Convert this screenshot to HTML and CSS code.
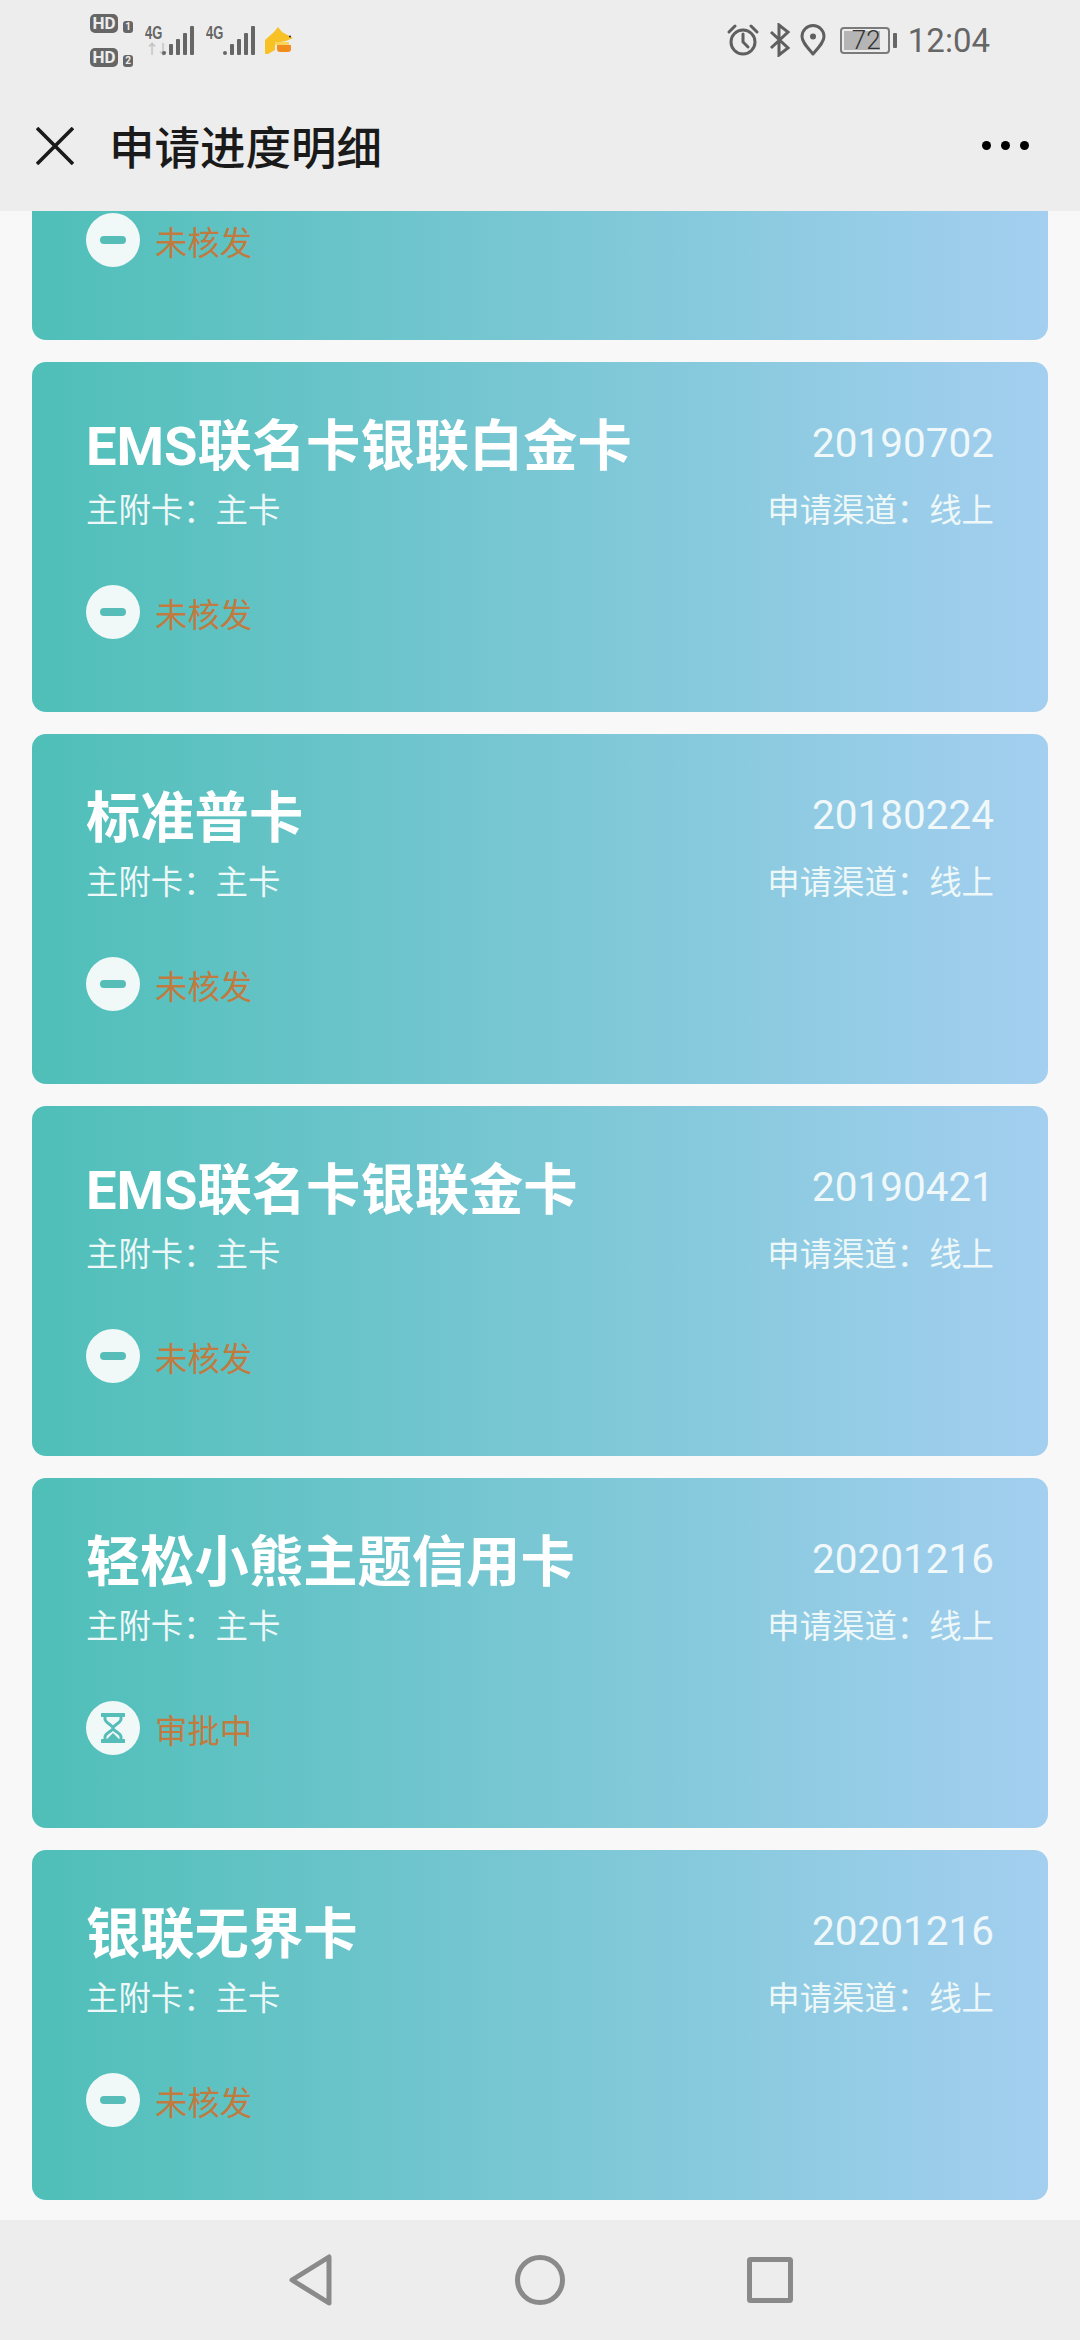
FILE: index.html
```html
<!DOCTYPE html>
<html lang="zh-CN">
<head>
    <meta charset="UTF-8">
    <meta name="viewport" content="width=device-width, initial-scale=1.0">
    <title>申请进度明细</title>
    <link rel="stylesheet" href="styles.css">
</head>
<body>
    <div class="screen">
        <!-- status bar -->
        <div class="statusbar">
            <div class="status-left">
                <div class="sims">
                    <div class="sim"><span class="hd">HD</span><span class="sim-no">1</span></div>
                    <div class="sim"><span class="hd">HD</span><span class="sim-no">2</span></div>
                </div>
                <div class="net">
                    <div class="net-labels">
                        <span class="net-type">4G</span>
                        <span class="net-arrows">↑↓</span>
                    </div>
                    <svg class="signal" width="32" height="29" viewBox="0 0 32 29">
                        <rect x="0" y="25" width="4" height="4" rx="2"/>
                        <rect x="7" y="18" width="4" height="11" rx="1"/>
                        <rect x="14" y="13" width="4" height="16" rx="1"/>
                        <rect x="21" y="7" width="4" height="22" rx="1"/>
                        <rect x="28" y="0" width="4" height="29" rx="1"/>
                    </svg>
                </div>
                <div class="net">
                    <div class="net-labels">
                        <span class="net-type">4G</span>
                    </div>
                    <svg class="signal" width="32" height="29" viewBox="0 0 32 29">
                        <rect x="0" y="25" width="4" height="4" rx="2"/>
                        <rect x="7" y="18" width="4" height="11" rx="1"/>
                        <rect x="14" y="13" width="4" height="16" rx="1"/>
                        <rect x="21" y="7" width="4" height="22" rx="1"/>
                        <rect x="28" y="0" width="4" height="29" rx="1"/>
                    </svg>
                </div>
                <svg class="pet" width="28" height="27" viewBox="0 0 28 27">
                    <path d="M0 13 L9 5 L13 0 L17 5 L28 11 L21 14 L10 16 L10 23 L3 27 L0 27 Z" fill="#f8c126"/>
                    <path d="M10 15 H24 V18 H10 Z" fill="#f8d65a"/>
                    <path d="M12 18 H26 V22 Q26 25 23 25 H15 Q12 25 12 22 Z" fill="#f28c1c"/>
                    <circle cx="25" cy="9.500" r="1" fill="#222"/>
                </svg>
            </div>
            <div class="status-right">
                <svg width="32" height="32" viewBox="0 0 32 32" fill="none" stroke="#5f5f5f" stroke-width="3">
                    <circle cx="16" cy="18" r="12"/>
                    <path d="M16 10 V18 L21 23" stroke-linecap="round"/>
                    <path d="M2 8 L8 2 M24 2 L30 8" stroke-linecap="round"/>
                </svg>
                <svg class="bt" width="22" height="34" viewBox="0 0 22 34" fill="none" stroke="#5f5f5f" stroke-width="3">
                    <path d="M2 9 L19 25 L10 32 V2 L19 9 L2 25"/>
                </svg>
                <svg class="pin" width="26" height="32" viewBox="0 0 26 32" fill="none" stroke="#5f5f5f" stroke-width="3">
                    <path d="M13 30 C7 23 2 18 2 12.500 A11 11 0 0 1 24 12.500 C24 18 19 23 13 30 Z" stroke-linejoin="round"/>
                    <circle cx="13" cy="12.500" r="3" fill="#5f5f5f" stroke="none"/>
                </svg>
                <div class="battery">
                    <div class="battery-body">
                        <div class="battery-fill"></div>
                        <span class="battery-text">72</span>
                    </div>
                    <div class="battery-tip"></div>
                </div>
                <span class="time">12:04</span>
            </div>
        </div>

        <!-- title bar -->
        <div class="titlebar">
            <svg class="close" width="38" height="38" viewBox="0 0 38 38" fill="none" stroke="#1a1a1a" stroke-width="3.6">
                <path d="M1 1 L37 37 M37 1 L1 37"/>
            </svg>
            <h1 class="page-title">申请进度明细</h1>
            <div class="more"><span></span><span></span><span></span></div>
        </div>

        <!-- cards are pinned to the bottom, the first one is scrolled under the title bar -->
        <div class="list">
            <div class="card">
                <div class="state">
                    <span class="state-icon"><i class="minus"></i></span>
                    <span class="state-text">未核发</span>
                </div>
            </div>
            <div class="card">
                <div class="card-row">
                    <div class="card-name">EMS联名卡银联白金卡</div>
                    <div class="card-date">20190702</div>
                </div>
                <div class="card-row card-sub">
                    <span>主附卡：主卡</span>
                    <span>申请渠道：线上</span>
                </div>
                <div class="state">
                    <span class="state-icon"><i class="minus"></i></span>
                    <span class="state-text">未核发</span>
                </div>
            </div>
            <div class="card">
                <div class="card-row">
                    <div class="card-name">标准普卡</div>
                    <div class="card-date">20180224</div>
                </div>
                <div class="card-row card-sub">
                    <span>主附卡：主卡</span>
                    <span>申请渠道：线上</span>
                </div>
                <div class="state">
                    <span class="state-icon"><i class="minus"></i></span>
                    <span class="state-text">未核发</span>
                </div>
            </div>
            <div class="card">
                <div class="card-row">
                    <div class="card-name">EMS联名卡银联金卡</div>
                    <div class="card-date">20190421</div>
                </div>
                <div class="card-row card-sub">
                    <span>主附卡：主卡</span>
                    <span>申请渠道：线上</span>
                </div>
                <div class="state">
                    <span class="state-icon"><i class="minus"></i></span>
                    <span class="state-text">未核发</span>
                </div>
            </div>
            <div class="card">
                <div class="card-row">
                    <div class="card-name">轻松小熊主题信用卡</div>
                    <div class="card-date">20201216</div>
                </div>
                <div class="card-row card-sub">
                    <span>主附卡：主卡</span>
                    <span>申请渠道：线上</span>
                </div>
                <div class="state">
                    <span class="state-icon">
                        <svg width="24" height="30" viewBox="0 0 24 30" fill="none" stroke="#56bdb9" stroke-width="3">
                            <path d="M1 2 H23 M1 28 H23" stroke-width="4" stroke-linecap="round"/>
                            <path d="M4 3 V6 C4 10 12 12 12 15 C12 18 4 20 4 24 V27 M20 3 V6 C20 10 12 12 12 15 C12 18 20 20 20 24 V27"/>
                            <path d="M5 27 L12 20 L19 27 Z" fill="#56bdb9" stroke="none"/>
                        </svg>
                    </span>
                    <span class="state-text">审批中</span>
                </div>
            </div>
            <div class="card">
                <div class="card-row">
                    <div class="card-name">银联无界卡</div>
                    <div class="card-date">20201216</div>
                </div>
                <div class="card-row card-sub">
                    <span>主附卡：主卡</span>
                    <span>申请渠道：线上</span>
                </div>
                <div class="state">
                    <span class="state-icon"><i class="minus"></i></span>
                    <span class="state-text">未核发</span>
                </div>
            </div>
        </div>

        <!-- android nav bar -->
        <div class="navbar">
            <svg width="44" height="52" viewBox="0 0 44 52" fill="none" stroke="#8a8a8a" stroke-width="5" stroke-linejoin="round">
                <path d="M40 3 V49 L3 26 Z"/>
            </svg>
            <svg width="50" height="50" viewBox="0 0 50 50" fill="none" stroke="#8a8a8a" stroke-width="5">
                <circle cx="25" cy="25" r="22.5"/>
            </svg>
            <svg width="46" height="46" viewBox="0 0 46 46" fill="none" stroke="#8a8a8a" stroke-width="5" stroke-linejoin="round">
                <rect x="2.5" y="2.5" width="41" height="41" rx="1"/>
            </svg>
        </div>
    </div>
</body>
</html>
```

FILE: styles.css
```css
body {
    margin: 0;
    padding: 0;
    background-color: #f8f8f8;
    font-family: "Roboto", "Noto Sans CJK SC", sans-serif;
}

.screen {
    width: 1080px;
    height: 2340px;
    display: flex;
    flex-direction: column;
    overflow: hidden;
}

/* status bar */
.statusbar {
    height: 80px;
    flex: none;
    display: flex;
    justify-content: space-between;
    align-items: center;
    padding: 0 90px 0 90px;
    background-color: #ededed;
    color: #5f5f5f;
}

.status-left {
    display: flex;
    align-items: center;
}

.sims {
    display: flex;
    flex-direction: column;
    gap: 15px;
    margin-right: 12px;
}

.sim {
    display: flex;
    align-items: flex-end;
    gap: 5px;
}

.hd {
    width: 28px;
    height: 19px;
    border-radius: 5px;
    background-color: #666;
    color: #ededed;
    font-size: 17px;
    font-weight: 700;
    line-height: 19px;
    text-align: center;
}

.sim-no {
    width: 10px;
    height: 12px;
    border-radius: 3px;
    background-color: #666;
    color: #ededed;
    font-size: 10px;
    font-weight: 700;
    line-height: 12px;
    text-align: center;
}

.net {
    display: flex;
    margin-right: 12px;
}

.net-labels {
    width: 17px;
    height: 29px;
    display: flex;
    flex-direction: column;
}

.net-type {
    height: 14px;
    font-family: "Liberation Sans", sans-serif;
    font-size: 18px;
    font-weight: 700;
    line-height: 14px;
    white-space: nowrap;
    color: #666;
    transform: scaleX(0.72);
    transform-origin: left center;
}

.net-arrows {
    height: 11px;
    margin-top: 4px;
    font-size: 14px;
    font-weight: 700;
    line-height: 11px;
    letter-spacing: -3px;
    white-space: nowrap;
    color: #c4c4c4;
}

.signal {
    fill: #666;
}

.pet {
    margin-left: -2px;
}

.status-right {
    display: flex;
    align-items: center;
}

.bt {
    margin-left: 10px;
}

.pin {
    margin-left: 9px;
}

.battery {
    display: flex;
    align-items: center;
    gap: 3px;
    margin-left: 14px;
}

.battery-body {
    width: 50px;
    height: 27px;
    box-sizing: border-box;
    border: 2px solid #7b7b7b;
    border-radius: 4px;
    padding: 2px;
    position: relative;
}

.battery-fill {
    width: 86%;
    height: 100%;
    background-color: #b5b5b5;
}

.battery-text {
    position: absolute;
    left: 10px;
    top: 0;
    font-size: 26px;
    font-weight: 300;
    line-height: 23px;
    color: #333;
}

.battery-tip {
    width: 4px;
    height: 15px;
    border-radius: 1px;
    background-color: #666;
}

.time {
    margin-left: 11px;
    font-size: 33px;
    color: #666;
}

/* title bar */
.titlebar {
    height: 131px;
    flex: none;
    display: flex;
    align-items: center;
    padding: 0 51px 0 36px;
    background-color: #ededed;
}

.page-title {
    margin: 0 0 2px 35px;
    flex: 1;
    font-size: 45.500px;
    font-weight: 500;
    color: #1a1a1a;
}

.more {
    display: flex;
    gap: 10px;
}

.more span {
    width: 9px;
    height: 9px;
    border-radius: 50%;
    background-color: #000;
}

/* cards */
.list {
    flex: 1;
    min-height: 0;
    overflow: hidden;
    display: flex;
    flex-direction: column;
    justify-content: flex-end;
    gap: 22px;
    padding: 0 32px 20px;
}

.card {
    height: 350px;
    flex: none;
    box-sizing: border-box;
    display: flex;
    flex-direction: column;
    padding: 42px 54px 73px 54px;
    border-radius: 14px;
    background: linear-gradient(90deg, #4fbfb8, #a4cff0);
    color: #fff;
}

.card-row {
    display: flex;
    justify-content: space-between;
    align-items: center;
}

.card-name {
    padding-top: 6px;
    font-size: 54.300px;
    font-weight: 700;
    line-height: 74px;
}

.card-date {
    margin-bottom: 2px;
    font-size: 40.500px;
    line-height: 56px;
    color: #f0f8fa;
}

.card-sub {
    margin-top: 5px;
    font-size: 32.400px;
    line-height: 44px;
    color: #eef8f8;
}

.state {
    display: flex;
    align-items: center;
    gap: 15px;
    margin-top: auto;
}

.state-icon {
    width: 54px;
    height: 54px;
    border-radius: 50%;
    background-color: #f1f8f8;
    display: flex;
    align-items: center;
    justify-content: center;
}

.minus {
    width: 26px;
    height: 8px;
    border-radius: 4px;
    background-color: #56bdb9;
}

.state-text {
    font-size: 32.400px;
    color: #c17a3f;
}

/* android nav bar */
.navbar {
    height: 120px;
    flex: none;
    display: flex;
    align-items: center;
    justify-content: center;
    gap: 182px;
    padding-left: 2px;
    background-color: #ededed;
}
```
